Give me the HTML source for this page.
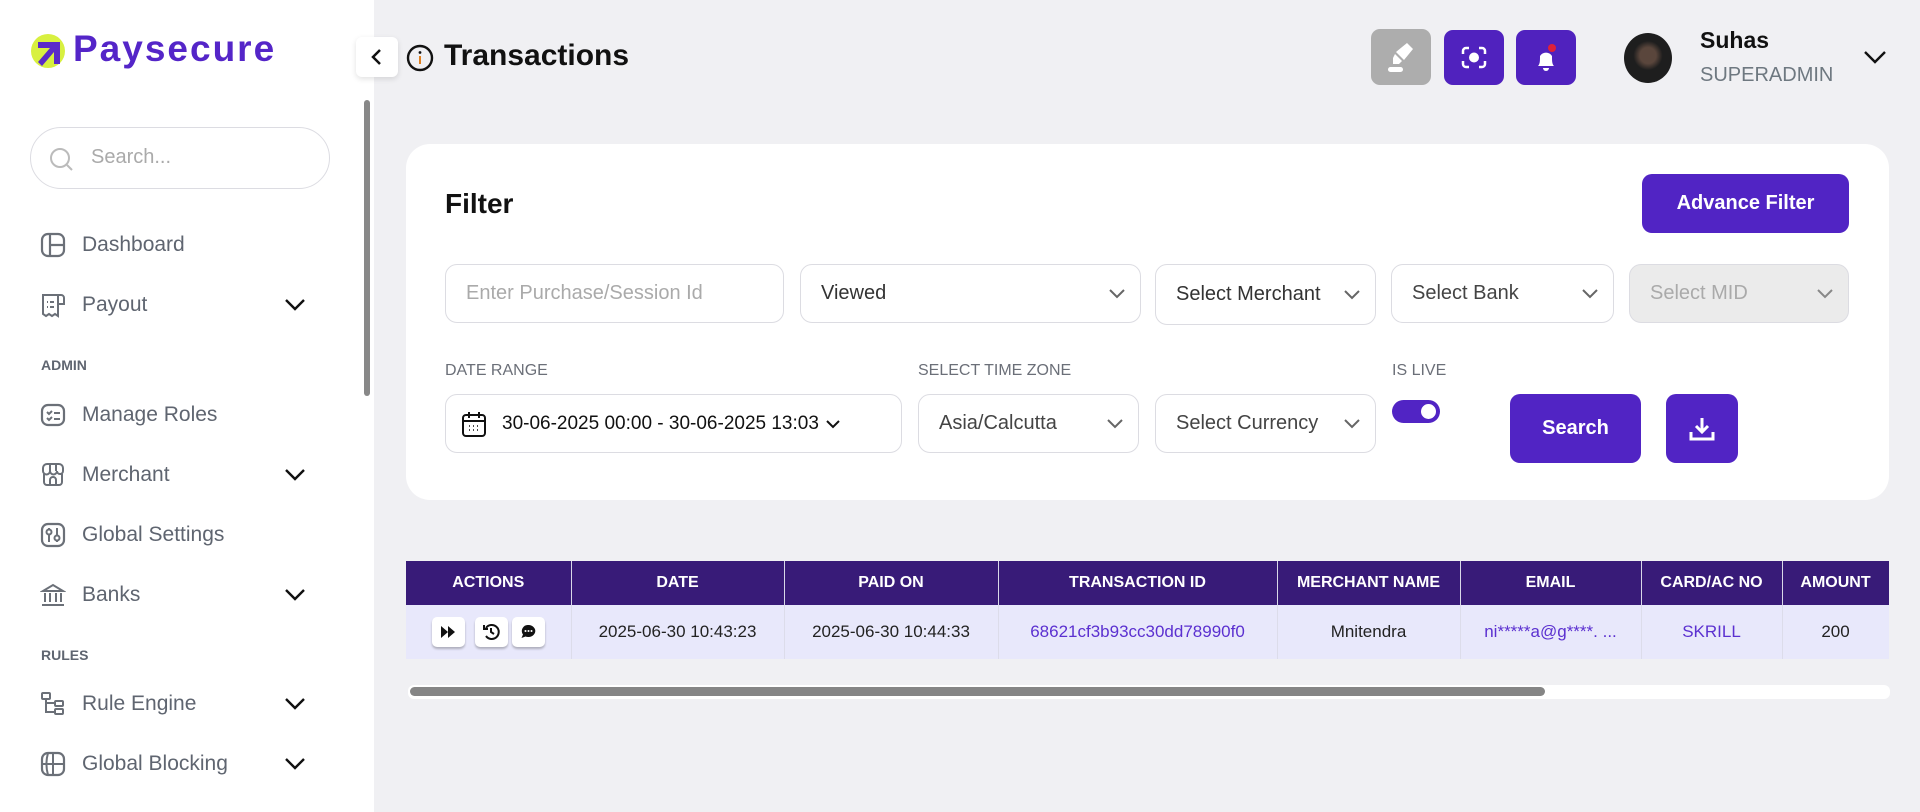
<!DOCTYPE html>
<html><head><meta charset="utf-8">
<style>
*{box-sizing:border-box;margin:0;padding:0}
body{width:1920px;height:812px;overflow:hidden;background:#f0f0f3;font-family:"Liberation Sans",sans-serif;position:relative;color:#111}
.a{position:absolute}
.side{left:0;top:0;width:374px;height:812px;background:#fff}
.mi{position:absolute;left:40px;font-size:21px;color:#5f6570;display:flex;align-items:center;gap:16px;height:30px}
.mi svg{width:26px;height:26px}
.sec{position:absolute;left:41px;font-size:14px;color:#5f6570;font-weight:bold}
.inp{position:absolute;background:#fff;border:1px solid #dcdce2;border-radius:12px;display:flex;align-items:center;padding-left:20px;font-size:20px;color:#333}
.inp .dd{position:absolute;right:14px;top:50%;margin-top:-7px}
.lbl{position:absolute;top:362px;font-size:16px;color:#6b6f78}
.btn{position:absolute;background:#5124c4;border-radius:10px;color:#fff;font-weight:bold;display:flex;align-items:center;justify-content:center}
table{border-collapse:collapse;position:absolute;left:406px;top:561px;table-layout:fixed;width:1583px}
th{background:#381b78;color:#fff;font-size:16px;font-weight:bold;height:44px;border-right:1px solid #d8d8e8;text-align:center;white-space:nowrap;overflow:hidden}
td{background:#e8e8fb;font-size:17px;height:54px;text-align:center;border-right:1px solid #dcdcea;border-bottom:1px solid #dcdcea;color:#222;white-space:nowrap;overflow:hidden}
td.l{color:#5b30d0}
.ab{display:inline-block;width:33px;height:30px;background:#fff;border-radius:5px;box-shadow:0 2px 2px rgba(0,0,0,.25);margin:0 2px;vertical-align:middle;position:relative}
</style></head><body>
<div class="a side"></div>
<svg class="a" style="left:30px;top:30px" width="40" height="40" viewBox="0 0 40 40"><circle cx="18" cy="21" r="17" fill="#d8f040"/><path d="M8 12h22v22h-6V22L12 36l-4-4 12-14H8z" fill="#5a2ac9"/></svg>
<div class="a" style="left:73px;top:28px;font-size:37px;font-weight:bold;color:#5425c8;letter-spacing:2px">Paysecure</div>
<div class="a" style="left:356px;top:37px;width:42px;height:40px;background:#fff;border-radius:6px;box-shadow:0 2px 6px rgba(0,0,0,.12)"><svg width="42" height="40"><path d="M24 13l-7 7 7 7" stroke="#111" stroke-width="2.5" fill="none"/></svg></div>
<div class="a" style="left:364px;top:100px;width:6px;height:296px;background:#888;border-radius:3px"></div>
<div class="a" style="left:30px;top:127px;width:300px;height:62px;border:1px solid #dcdce2;border-radius:31px"></div>
<svg class="a" style="left:48px;top:146px" width="28" height="28"><circle cx="12" cy="12" r="9" stroke="#bbb" stroke-width="2" fill="none"/><path d="M19 19l5 5" stroke="#bbb" stroke-width="2"/></svg>
<div class="a" style="left:91px;top:146px;font-size:20px;color:#aaa">Search...</div>
<div class="mi" style="top:230px"><svg viewBox="0 0 26 26"><rect x="2" y="2" width="22" height="22" rx="6" stroke="#6b7078" stroke-width="2.2" fill="none"/><path d="M10 2v22M10 13h14" stroke="#6b7078" stroke-width="2.2"/></svg>Dashboard</div>
<div class="mi" style="top:290px"><svg viewBox="0 0 26 26"><path d="M3 3h15v21l-3-2-3 2-3-2-3 2-3-2zM18 3h3a3 3 0 0 1 3 3v6h-6M7 10h1M10 10h4M7 15h1M10 15h4" stroke="#6b7078" stroke-width="2" fill="none"/></svg>Payout</div>
<div class="sec" style="top:357px">ADMIN</div>
<div class="mi" style="top:400px"><svg viewBox="0 0 26 26"><rect x="2" y="3" width="22" height="20" rx="6" stroke="#6b7078" stroke-width="2.2" fill="none"/><path d="M7 10l2 2 3-3M7 16l2 2 3-3M14 11h6M14 17h6" stroke="#6b7078" stroke-width="2" fill="none"/></svg>Manage Roles</div>
<div class="mi" style="top:460px"><svg viewBox="0 0 26 26"><path d="M3 9V6a4 4 0 0 1 4-4h12a4 4 0 0 1 4 4v3a3 3 0 0 1-6 0 3 3 0 0 1-7 0 3 3 0 0 1-7 0zM4 12v8a3 3 0 0 0 3 3h12a3 3 0 0 0 3-3v-8M10 23v-5a3 3 0 0 1 6 0v5M10 2v7M16 2v7" stroke="#6b7078" stroke-width="2" fill="none"/></svg>Merchant</div>
<div class="mi" style="top:520px"><svg viewBox="0 0 26 26"><rect x="2" y="2" width="22" height="22" rx="6" stroke="#6b7078" stroke-width="2.2" fill="none"/><circle cx="9" cy="10" r="2.5" stroke="#6b7078" stroke-width="2" fill="none"/><circle cx="17" cy="16" r="2.5" stroke="#6b7078" stroke-width="2" fill="none"/><path d="M9 13v7M9 6v1M17 6v7M17 19v1" stroke="#6b7078" stroke-width="2"/></svg>Global Settings</div>
<div class="mi" style="top:580px"><svg viewBox="0 0 26 26"><path d="M3 9l10-6 10 6zM5 11v9M10 11v9M16 11v9M21 11v9M2 23h22" stroke="#6b7078" stroke-width="2" fill="none"/></svg>Banks</div>
<div class="sec" style="top:647px">RULES</div>
<div class="mi" style="top:689px"><svg viewBox="0 0 26 26"><rect x="2" y="2" width="8" height="6" rx="1" stroke="#6b7078" stroke-width="2" fill="none"/><rect x="15" y="10" width="8" height="5" rx="1" stroke="#6b7078" stroke-width="2" fill="none"/><rect x="15" y="18" width="8" height="5" rx="1" stroke="#6b7078" stroke-width="2" fill="none"/><path d="M6 8v13h9M6 12h9" stroke="#6b7078" stroke-width="2" fill="none"/></svg>Rule Engine</div>
<div class="mi" style="top:749px"><svg viewBox="0 0 26 26"><rect x="2" y="2" width="22" height="22" rx="6" stroke="#6b7078" stroke-width="2.2" fill="none"/><path d="M2 13h22M13 2v22M8 2c-2 7-2 15 0 22" stroke="#6b7078" stroke-width="2" fill="none"/></svg>Global Blocking</div>
<svg class="a" style="left:284px;top:298px" width="22" height="14"><path d="M2 2l9 9 9-9" stroke="#111" stroke-width="2.4" fill="none"/></svg>
<svg class="a" style="left:284px;top:468px" width="22" height="14"><path d="M2 2l9 9 9-9" stroke="#111" stroke-width="2.4" fill="none"/></svg>
<svg class="a" style="left:284px;top:588px" width="22" height="14"><path d="M2 2l9 9 9-9" stroke="#111" stroke-width="2.4" fill="none"/></svg>
<svg class="a" style="left:284px;top:697px" width="22" height="14"><path d="M2 2l9 9 9-9" stroke="#111" stroke-width="2.4" fill="none"/></svg>
<svg class="a" style="left:284px;top:757px" width="22" height="14"><path d="M2 2l9 9 9-9" stroke="#111" stroke-width="2.4" fill="none"/></svg>
<svg class="a" style="left:406px;top:44px" width="28" height="28"><circle cx="14" cy="14" r="12" stroke="#111" stroke-width="2.4" fill="none"/><path d="M14 12v8" stroke="#e08020" stroke-width="2"/><circle cx="14" cy="8.5" r="1.4" fill="#111"/></svg>
<div class="a" style="left:444px;top:39px;font-size:30px;font-weight:bold">Transactions</div>
<div class="a" style="left:1371px;top:29px;width:60px;height:56px;background:#adadad;border-radius:9px"><svg width="60" height="56"><path d="M36 14l6 6-9 11-8-8z" fill="#fff"/><path d="M24 25l7 7-3 3h-6v-6z" fill="#fff"/><rect x="17" y="38" width="15" height="5" rx="2.5" fill="#fff"/></svg></div>
<div class="a" style="left:1444px;top:30px;width:60px;height:55px;background:#5022be;border-radius:9px"><svg width="60" height="55"><path d="M19 24v-3a3 3 0 0 1 3-3h3M35 18h3a3 3 0 0 1 3 3v3M41 31v3a3 3 0 0 1-3 3h-3M25 37h-3a3 3 0 0 1-3-3v-3" stroke="#fff" stroke-width="2.5" fill="none"/><circle cx="30" cy="27.5" r="5" fill="#fff"/></svg></div>
<div class="a" style="left:1516px;top:30px;width:60px;height:55px;background:#5022be;border-radius:9px"><svg width="60" height="55"><path d="M22 36c2-2 2-5 2-10a7 7 0 0 1 12 0c0 5 0 8 2 10z" fill="#fff"/><path d="M27 38a3 3 0 0 0 6 0" fill="#fff"/><circle cx="36" cy="18" r="4" fill="#e0203a"/></svg></div>
<div class="a" style="left:1624px;top:33px;width:48px;height:50px;border-radius:50%;background:radial-gradient(circle at 50% 45%,#5a463c 0 22%,#1e1e1e 40%)"></div>
<div class="a" style="left:1700px;top:27px;font-size:23px;font-weight:bold">Suhas</div>
<div class="a" style="left:1700px;top:64px;font-size:20px;color:#6e7880">SUPERADMIN</div>
<svg class="a" style="left:1863px;top:49px" width="24" height="16"><path d="M2 3l10 10 10-10" stroke="#111" stroke-width="2.4" fill="none"/></svg>
<div class="a" style="left:406px;top:144px;width:1483px;height:356px;background:#fff;border-radius:24px"></div>
<div class="a" style="left:445px;top:188px;font-size:28px;font-weight:bold">Filter</div>
<div class="btn" style="left:1642px;top:174px;width:207px;height:59px;font-size:20px">Advance Filter</div>
<div class="inp" style="left:445px;top:264px;width:339px;height:59px;color:#aaa">Enter Purchase/Session Id</div>
<div class="inp" style="left:800px;top:264px;width:341px;height:59px">Viewed<svg class="dd" width="18" height="14"><path d="M2 3l7 7 7-7" stroke="#666" stroke-width="2" fill="none"/></svg></div>
<div class="inp" style="left:1155px;top:264px;width:221px;height:61px">Select Merchant<svg class="dd" width="18" height="14"><path d="M2 3l7 7 7-7" stroke="#666" stroke-width="2" fill="none"/></svg></div>
<div class="inp" style="left:1391px;top:264px;width:223px;height:59px;color:#444">Select Bank<svg class="dd" width="18" height="14"><path d="M2 3l7 7 7-7" stroke="#666" stroke-width="2" fill="none"/></svg></div>
<div class="inp" style="left:1629px;top:264px;width:220px;height:59px;background:#ebebeb;color:#aaa">Select MID<svg class="dd" width="18" height="14"><path d="M2 3l7 7 7-7" stroke="#888" stroke-width="2" fill="none"/></svg></div>
<div class="lbl" style="left:445px">DATE RANGE</div>
<div class="lbl" style="left:918px">SELECT TIME ZONE</div>
<div class="lbl" style="left:1392px">IS LIVE</div>
<div class="inp" style="left:445px;top:394px;width:457px;height:59px;font-size:19px;color:#111;padding-left:14px"><svg width="28" height="30" style="margin-right:14px"><rect x="3" y="6" width="22" height="21" rx="3" stroke="#111" stroke-width="2" fill="none"/><path d="M3 12h22M9 3v6M19 3v6" stroke="#111" stroke-width="2"/><path d="M9 17h1M13 17h1M17 17h1M9 21h1M13 21h1M17 21h1" stroke="#111" stroke-width="1.6"/></svg>30-06-2025 00:00 - 30-06-2025 13:03<svg width="16" height="12" style="margin-left:6px"><path d="M2 3l6 6 6-6" stroke="#111" stroke-width="2" fill="none"/></svg></div>
<div class="inp" style="left:918px;top:394px;width:221px;height:59px;color:#444">Asia/Calcutta<svg class="dd" width="18" height="14"><path d="M2 3l7 7 7-7" stroke="#666" stroke-width="2" fill="none"/></svg></div>
<div class="inp" style="left:1155px;top:394px;width:221px;height:59px;color:#444">Select Currency<svg class="dd" width="18" height="14"><path d="M2 3l7 7 7-7" stroke="#666" stroke-width="2" fill="none"/></svg></div>
<div class="a" style="left:1392px;top:400px;width:48px;height:23px;background:#5124c4;border-radius:12px"><div style="position:absolute;right:4px;top:4px;width:15px;height:15px;border-radius:50%;background:#fff"></div></div>
<div class="btn" style="left:1510px;top:394px;width:131px;height:69px;font-size:20px">Search</div>
<div class="btn" style="left:1666px;top:394px;width:72px;height:69px"><svg width="30" height="30"><path d="M15 4v14M9 12l6 6 6-6M4 18v7h22v-7" stroke="#fff" stroke-width="3" fill="none"/></svg></div>
<div class="a" style="left:406px;top:561px;width:1483px;height:98px;overflow:hidden">
<table style="left:0;top:0">
<colgroup><col style="width:165px"><col style="width:213px"><col style="width:214px"><col style="width:279px"><col style="width:183px"><col style="width:181px"><col style="width:141px"><col style="width:107px"><col style="width:100px"></colgroup>
<tr><th>ACTIONS</th><th>DATE</th><th>PAID ON</th><th>TRANSACTION ID</th><th>MERCHANT NAME</th><th>EMAIL</th><th>CARD/AC NO</th><th>AMOUNT</th><th></th></tr>
<tr><td><span class="ab"><svg width="33" height="30"><path d="M9 9l7 6-7 6zM16 9l7 6-7 6z" fill="#111"/></svg></span><span class="ab" style="margin-left:8px"><svg width="33" height="30"><path d="M11 11a7 7 0 1 1 0 8" stroke="#111" stroke-width="2" fill="none"/><path d="M9 8v4h4M16 11v4l3 2" stroke="#111" stroke-width="2" fill="none"/></svg></span><span class="ab"><svg width="33" height="30"><path d="M16.5 8a7 6 0 1 1-3 11.5l-4 1.5 1.5-3.5A6 6 0 0 1 16.5 8z" fill="#111"/><circle cx="13.5" cy="14" r="1" fill="#fff"/><circle cx="16.5" cy="14" r="1" fill="#fff"/><circle cx="19.5" cy="14" r="1" fill="#fff"/></svg></span></td><td>2025-06-30 10:43:23</td><td>2025-06-30 10:44:33</td><td class="l">68621cf3b93cc30dd78990f0</td><td>Mnitendra</td><td class="l">ni*****a@g****. ...</td><td class="l">SKRILL</td><td>200</td><td></td></tr>
</table></div>
<div class="a" style="left:408px;top:685px;width:1482px;height:14px;background:#fff;border-radius:6px"></div>
<div class="a" style="left:410px;top:687px;width:1135px;height:9px;background:#858585;border-radius:5px"></div>
</body></html>
